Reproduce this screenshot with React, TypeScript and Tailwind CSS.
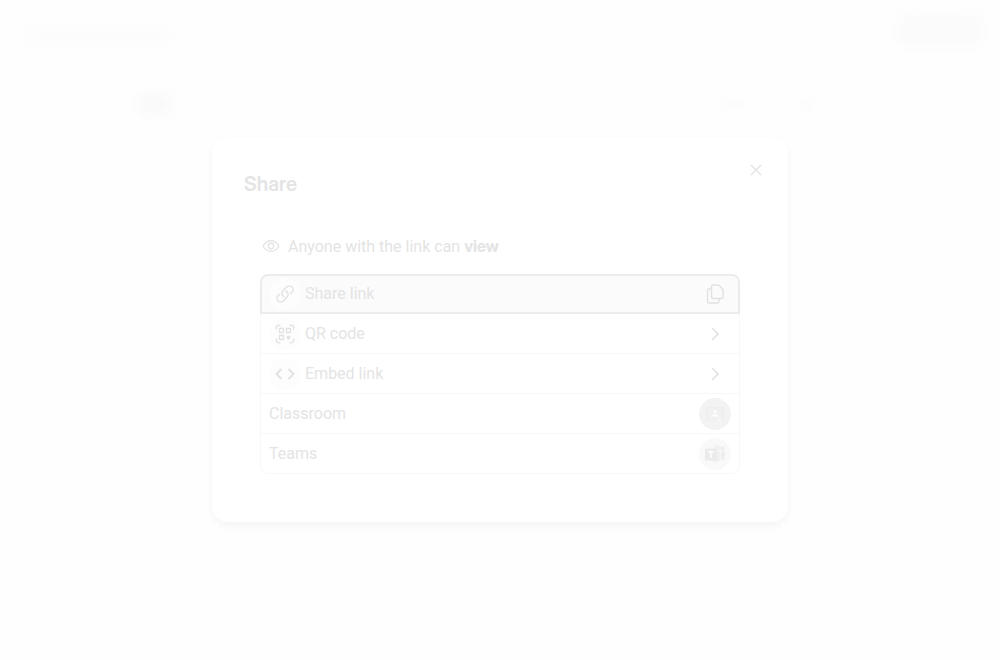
import type { ReactNode } from "react";

function EyeIcon() {
  return (
    <svg width="18" height="18" viewBox="0 0 18 18" fill="none" stroke="currentColor" strokeWidth="1.4" aria-hidden="true">
      <path d="M1 9C3 5.600 5.800 3.700 9 3.700S15 5.600 17 9c-2 3.400-4.800 5.300-8 5.300S3 12.400 1 9Z" strokeLinejoin="round" />
      <circle cx="9" cy="9" r="2.700" />
    </svg>
  );
}

function LinkIcon() {
  return (
    <svg width="20" height="20" viewBox="0 0 24 24" fill="none" stroke="currentColor" strokeWidth="1.7" strokeLinecap="round" strokeLinejoin="round" aria-hidden="true">
      <path d="M13.19 8.688a4.5 4.5 0 0 1 1.242 7.244l-4.5 4.5a4.5 4.5 0 0 1-6.364-6.364l1.757-1.757m13.35-.622 1.757-1.757a4.5 4.5 0 0 0-6.364-6.364l-4.5 4.5a4.5 4.5 0 0 0 1.242 7.244" />
    </svg>
  );
}

function QrIcon() {
  return (
    <svg width="20" height="20" viewBox="0 0 20 20" fill="none" stroke="currentColor" strokeWidth="1.3" aria-hidden="true">
      <path d="M5 1.2H4A2.6 2.6 0 0 0 1.4 3.8V5M15 1.2h1a2.6 2.6 0 0 1 2.6 2.6V5M5 18.8H4a2.6 2.6 0 0 1-2.6-2.6V15M15 18.8h1a2.6 2.6 0 0 0 2.6-2.6V15" strokeLinecap="round" />
      <path d="M4.500 4.500h4v4h-4zM11.500 4.500h4v4h-4zM4.500 11.500h4v4h-4z" />
      <circle cx="13.500" cy="13.500" r="1.900" fill="currentColor" stroke="none" />
    </svg>
  );
}

function CodeIcon() {
  return (
    <svg width="20" height="20" viewBox="0 0 20 20" fill="none" stroke="currentColor" strokeWidth="2" aria-hidden="true">
      <path d="M6.500 5 1.500 10l5 5M13.500 5l5 5-5 5" />
    </svg>
  );
}

function CopyIcon() {
  return (
    <svg width="20" height="20" viewBox="0 0 20 20" fill="none" stroke="currentColor" strokeWidth="1.4" strokeLinejoin="round" aria-hidden="true">
      <path d="M8 1h5.500L18 5.500V13a1.500 1.500 0 0 1-1.500 1.500H8A1.500 1.500 0 0 1 6.500 13V2.500A1.500 1.500 0 0 1 8 1Z" />
      <path d="M6.500 5H4A1.500 1.500 0 0 0 2.500 6.500v11A1.500 1.500 0 0 0 4 19h8.500a1.500 1.500 0 0 0 1.500-1.500v-3" />
    </svg>
  );
}

function ChevronIcon() {
  return (
    <svg width="20" height="20" viewBox="0 0 20 20" fill="none" stroke="currentColor" strokeWidth="1.7" aria-hidden="true">
      <path d="m7 4 6 6-6 6" />
    </svg>
  );
}

function ClassroomIcon() {
  return (
    <svg width="32" height="32" viewBox="0 0 32 32" aria-hidden="true">
      <circle cx="16" cy="16" r="16" fill="#f3f3f3" />
      <rect x="7" y="9" width="18" height="14" rx="1" fill="#eeeeee" />
      <rect x="8.500" y="10.500" width="15" height="11" fill="#f1f1f1" />
      <circle cx="16" cy="13.500" r="1.800" fill="#fdfdfd" />
      <path d="M12.500 18.500c0-1.600 1.600-2.500 3.500-2.500s3.500.9 3.500 2.500z" fill="#fdfdfd" />
      <path d="M18 21.500h5V23h-5z" fill="#f9f9f9" />
    </svg>
  );
}

function TeamsIcon() {
  return (
    <svg width="32" height="32" viewBox="0 0 32 32" aria-hidden="true">
      <circle cx="16" cy="16" r="16" fill="#f9f9f9" />
      <circle cx="23.500" cy="10.500" r="2.200" fill="#efefef" />
      <path d="M22.500 13.500H26V19a3.500 3.500 0 0 1-4 3z" fill="#eeeeee" />
      <circle cx="18" cy="9.800" r="3.100" fill="#f1f1f1" />
      <path d="M12 13.500h9.500V20a4.800 4.800 0 0 1-9.500 0z" fill="#f1f1f1" />
      <rect x="6" y="10.500" width="12" height="12" rx="1" fill="#ebebeb" />
      <path d="M9 13h6v1.600h-2.200V20h-1.600v-5.400H9z" fill="#fdfdfd" />
    </svg>
  );
}

type RowProps = { label: string; icon?: ReactNode; end: ReactNode; active?: boolean };

function Row({ label, icon, end, active }: RowProps) {
  return (
    <li className={active ? "rounded-t-lg border-2 border-[#ececec] bg-[#fbfbfb]" : "border-x border-b border-[#f8f8f8] last:rounded-b-lg"}>
      <button type="button" className={active ? "flex h-9 w-full items-center justify-between px-[7px] text-left" : "flex h-[39px] w-full items-center justify-between px-2 text-left"}>
        <span className="flex items-center gap-1">
          {icon && <span className="flex size-8 items-center justify-center rounded-full bg-[#fdfdfd] text-[#e2e2e2]">{icon}</span>}
          <span>{label}</span>
        </span>
        <span className="flex size-8 items-center justify-center text-[#e2e2e2]">{end}</span>
      </button>
    </li>
  );
}

export default function App() {
  return (
    <div className="relative min-h-screen bg-[#fefefe] font-['Roboto',sans-serif] text-base text-[#e4e4e4]">
      <div aria-hidden="true" className="absolute inset-x-0 top-0">
        <div className="flex items-start justify-between pt-3 pr-4 pl-7">
          <div className="mt-4 h-4 w-36 rounded-full bg-[#fcfcfc] blur-xs" />
          <div className="h-9 w-22 rounded-2xl bg-[#fbfbfb] blur-xs" />
        </div>
        <div className="flex items-center justify-between px-34 pt-11">
          <div className="h-6 w-9 rounded-full bg-[#fafafa] blur-xs" />
          <div className="flex items-center gap-14 pr-13">
            <div className="h-2 w-5 rounded-full bg-[#fcfcfc] blur-[2px]" />
            <div className="size-3 rounded-full bg-[#fcfcfc] blur-[2px]" />
          </div>
        </div>
      </div>
      <main className="relative flex min-h-screen items-center justify-center">
        <section role="dialog" aria-labelledby="share-title" className="w-full max-w-xl rounded-2xl bg-white px-8 pt-4 pb-12 shadow-[0_4px_8px_#0000000a]">
          <header className="flex items-start justify-between">
            <h1 id="share-title" className="pt-4 font-['Inter_Display','Inter',sans-serif] text-xl leading-7 font-semibold">Share</h1>
            <button type="button" aria-label="Close" className="-mr-4 flex size-8 items-center justify-center text-[#e2e2e2]">
              <svg width="12" height="12" viewBox="0 0 12 12" fill="none" stroke="currentColor" strokeWidth="1.3" aria-hidden="true">
                <path d="m1 1 10 10M11 1 1 11" />
              </svg>
            </button>
          </header>
          <div className="px-4 pt-9">
            <p className="mb-4 flex h-6 items-center gap-2 pl-0.5 leading-6">
              <EyeIcon />
              <span>Anyone with the link can <strong className="font-['Inter_Display','Inter',sans-serif] font-bold">view</strong></span>
            </p>
            <ul>
              <Row active label="Share link" icon={<LinkIcon />} end={<CopyIcon />} />
              <Row label="QR code" icon={<QrIcon />} end={<ChevronIcon />} />
              <Row label="Embed link" icon={<CodeIcon />} end={<ChevronIcon />} />
              <Row label="Classroom" end={<ClassroomIcon />} />
              <Row label="Teams" end={<TeamsIcon />} />
            </ul>
          </div>
        </section>
      </main>
    </div>
  );
}
